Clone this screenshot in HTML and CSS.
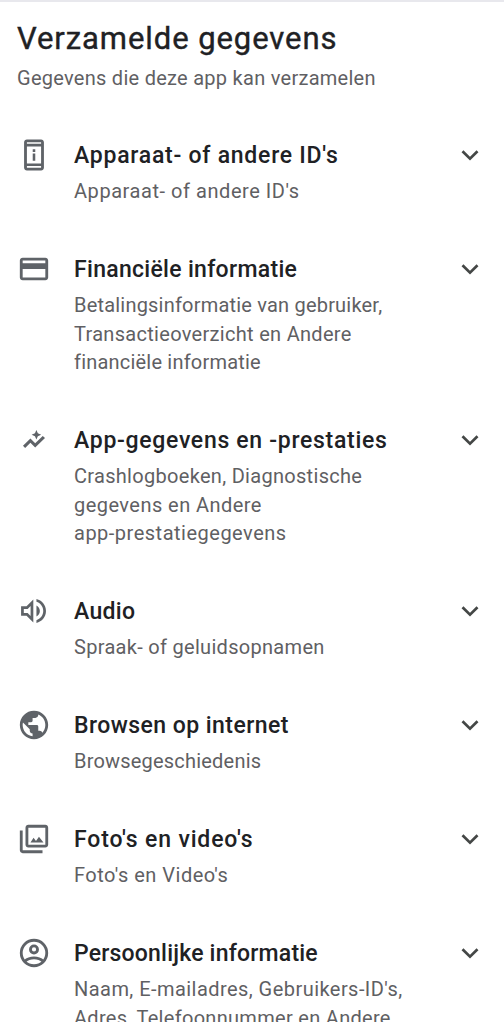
FILE: index.html
```html
<!DOCTYPE html>
<html lang="nl">
<head>
<meta charset="utf-8">
<meta name="viewport" content="width=device-width, initial-scale=1">
<title>Verzamelde gegevens</title>
<link rel="stylesheet" href="styles.css">
</head>
<body>
<main class="sheet">
  <header class="header">
    <h1 class="heading">Verzamelde gegevens</h1>
    <p class="intro">Gegevens die deze app kan verzamelen</p>
  </header>
  <section class="item">
    <svg class="icon" viewBox="0 0 24 24"><path d="M17 1H7c-1.100 0-2 .9-2 2v18c0 1.100.9 2 2 2h10c1.100 0 2-.9 2-2V3c0-1.100-.9-2-2-2zm0 20H7v-1.200h10V21zm0-3H7V6h10v12zm0-14H7V3h10v1zM11.100 8h1.800v1.800h-1.800zM11.100 11h1.800v5h-1.800z"/></svg>
    <div class="copy"><h2 class="title track-75">Apparaat- of andere ID's</h2><p class="detail"><span class="track-55">Apparaat- of andere ID's</span></p></div>
    <svg class="chevron" viewBox="0 0 20 20"><path d="M2.500 6.200 10 13.700 17.500 6.200"/></svg>
  </section>
  <section class="item">
    <svg class="icon" viewBox="0 0 24 24"><path d="M20 4H4c-1.110 0-1.990.89-1.990 2L2 18c0 1.110.89 2 2 2h16c1.110 0 2-.89 2-2V6c0-1.110-.89-2-2-2zm0 14H4v-6h16v6zm0-10H4V6h16v2z"/></svg>
    <div class="copy"><h2 class="title track-30">Financiële informatie</h2><p class="detail"><span class="track-20">Betalingsinformatie van gebruiker,</span><br><span class="track-30">Transactieoverzicht en Andere</span><br><span class="track-20">financiële informatie</span></p></div>
    <svg class="chevron" viewBox="0 0 20 20"><path d="M2.500 6.200 10 13.700 17.500 6.200"/></svg>
  </section>
  <section class="item">
    <svg class="icon" viewBox="-2.200 -2.800 28.400 28.400"><path d="M4.600 18 2.800 16.200l6.200-6 4 4L19.300 8 21.200 9.700l-8.200 8-4-4zM14 3l1.200 2.800L18 7l-2.800 1.200L14 11l-1.200-2.800L10 7l2.800-1.200z"/></svg>
    <div class="copy"><h2 class="title track-70">App-gegevens en -prestaties</h2><p class="detail"><span class="track-30">Crashlogboeken, Diagnostische</span><br><span class="track-45">gegevens en Andere</span><br><span class="track-50">app-prestatiegegevens</span></p></div>
    <svg class="chevron" viewBox="0 0 20 20"><path d="M2.500 6.200 10 13.700 17.500 6.200"/></svg>
  </section>
  <section class="item">
    <svg class="icon" viewBox="-1 -.5 25 25"><path d="M2 8.500v7h4l5 5V3.500l-5 5H2zm7-.17v7.340L6.830 13.500H4v-3h2.830L9 8.330zM15.800 12c0-1.770-1.020-3.290-2.500-4.030v8.050c1.480-.73 2.500-2.250 2.500-4.020zM13.300 3.230v2.060c2.890.86 5 3.540 5 6.710s-2.110 5.850-5 6.710v2.060c4.010-.91 7-4.490 7-8.770s-2.990-7.860-7-8.770z"/></svg>
    <div class="copy"><h2 class="title track-30">Audio</h2><p class="detail"><span class="track-30">Spraak- of geluidsopnamen</span></p></div>
    <svg class="chevron" viewBox="0 0 20 20"><path d="M2.500 6.200 10 13.700 17.500 6.200"/></svg>
  </section>
  <section class="item">
    <svg class="icon" viewBox="0 0 24 24"><path d="M12 2C6.480 2 2 6.480 2 12s4.480 10 10 10 10-4.480 10-10S17.520 2 12 2zm-1 17.930c-3.950-.49-7-3.850-7-7.930 0-.62.08-1.210.21-1.790L9 15v1c0 1.100.9 2 2 2v1.930zm6.900-2.540c-.26-.81-1-1.390-1.900-1.390h-1v-3c0-.55-.45-1-1-1H8v-2h2c.55 0 1-.45 1-1V7h2c1.100 0 2-.9 2-2v-.41c2.930 1.190 5 4.060 5 7.410 0 2.080-.8 3.970-2.100 5.390z"/></svg>
    <div class="copy"><h2 class="title track-45">Browsen op internet</h2><p class="detail"><span class="track-20">Browsegeschiedenis</span></p></div>
    <svg class="chevron" viewBox="0 0 20 20"><path d="M2.500 6.200 10 13.700 17.500 6.200"/></svg>
  </section>
  <section class="item">
    <svg class="icon" viewBox="0 0 24 24"><path fill-rule="evenodd" d="M20 2H8c-1.100 0-2 .9-2 2v12c0 1.100.9 2 2 2h12c1.100 0 2-.9 2-2V4c0-1.100-.9-2-2-2zm0 14H8V4h12v12zM9.500 14.500l2.200-3.300 1.700 2.200 2.100-3 3.200 4.100zM2 6v14c0 1.100.9 2 2 2h14v-2H4V6z"/></svg>
    <div class="copy"><h2 class="title track-85">Foto's en video's</h2><p class="detail"><span class="track-50">Foto's en Video's</span></p></div>
    <svg class="chevron" viewBox="0 0 20 20"><path d="M2.500 6.200 10 13.700 17.500 6.200"/></svg>
  </section>
  <section class="item">
    <svg class="icon outline" viewBox="0 0 24 24"><circle cx="12" cy="12" r="9"/><circle cx="12" cy="9.500" r="2.500"/><path d="M5.500 17.800c3.500-3.100 9.500-3.100 13 0"/></svg>
    <div class="copy"><h2 class="title track-20">Persoonlijke informatie</h2><p class="detail"><span class="track-45">Naam, E-mailadres, Gebruikers-ID's,</span><br><span class="track-30">Adres, Telefoonnummer en Andere</span></p></div>
    <svg class="chevron" viewBox="0 0 20 20"><path d="M2.500 6.200 10 13.700 17.500 6.200"/></svg>
  </section>
</main>
</body>
</html>
```
FILE: styles.css
```css
* { box-sizing: border-box; }
body { margin: 0; background: #fff; font-family: Roboto, "Noto Sans", sans-serif; }
h1, h2, p { margin: 0; }
.sheet { height: 1022px; overflow: hidden; border-top: 2px solid #e8e8ed; }
.header { padding: 17px 17px 46.5px; }
.heading { font-size: 31px; line-height: 40px; font-weight: 400; letter-spacing: .92px; color: #202124; -webkit-text-stroke: .4px #202124; }
.intro { margin-top: 5px; font-size: 20px; line-height: 29px; letter-spacing: .27px; color: #5f6063; }
.item { display: grid; grid-template-columns: 34px minmax(0, 1fr) 20px; column-gap: 23px; padding: 0 24px 48px 17px; }
.icon { width: 34px; height: 34px; margin-top: -2px; fill: #5f6368; }
.outline { fill: none; stroke: #5f6368; stroke-width: 2; }
.copy { white-space: nowrap; }
.title { padding-top: 1px; font-size: 23px; line-height: 30px; font-weight: 500; color: #202124; }
.detail { margin-top: 6.5px; font-size: 20px; line-height: 28.5px; color: #5f6063; }
.chevron { width: 20px; height: 20px; margin-top: 5px; fill: none; stroke: #444746; stroke-width: 2.700; }

/* Tracking, in hundredths of a pixel */
.track-20 { letter-spacing: .2px; }
.track-30 { letter-spacing: .3px; }
.track-45 { letter-spacing: .45px; }
.track-50 { letter-spacing: .5px; }
.track-55 { letter-spacing: .55px; }
.track-70 { letter-spacing: .7px; }
.track-75 { letter-spacing: .75px; }
.track-85 { letter-spacing: .85px; }
```
